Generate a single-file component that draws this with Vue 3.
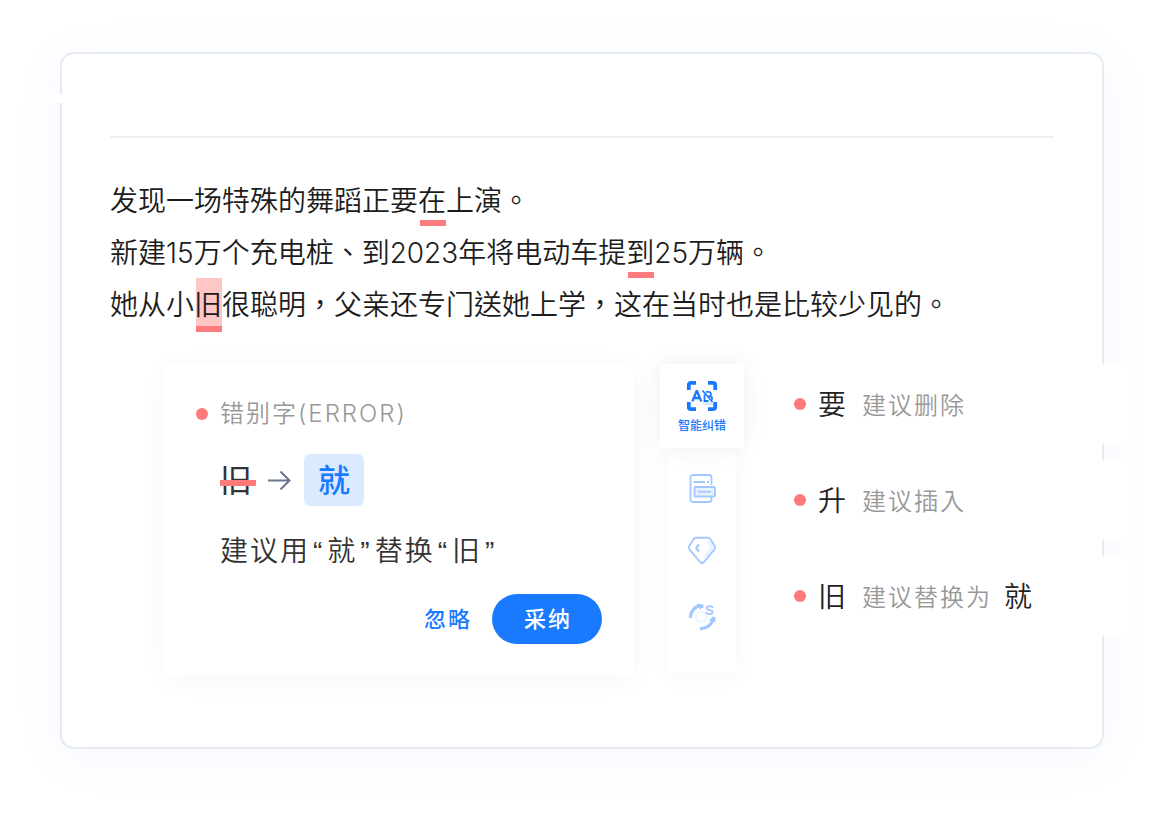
<script setup>
const lines = [
  [{ t: '发现一场特殊的舞蹈正要' }, { t: '在', mark: 'under' }, { t: '上演。' }],
  [{ t: '新建15万个充电桩、到2023年将电动车提' }, { t: '到', mark: 'under' }, { t: '25万辆。' }],
  [{ t: '她从小' }, { t: '旧', mark: 'under filled' }, { t: '很聪明，父亲还专门送她上学，这在当时也是比较少见的。' }],
]

const suggestions = [
  { word: '要', action: '建议删除' },
  { word: '升', action: '建议插入' },
  { word: '旧', action: '建议替换为', target: '就' },
]
</script>

<template>
  <main class="editor">
    <header class="bar"></header>

    <section class="document">
      <p v-for="(line, i) in lines" :key="i"><span v-for="(part, j) in line" :key="j" :class="part.mark">{{ part.t }}</span></p>
    </section>

    <div class="panels">
      <section class="popup">
        <h2 class="kind"><i class="dot"></i>错别字(ERROR)</h2>
        <div class="change">
          <del>旧</del>
          <svg class="arrow" width="24" height="20" viewBox="0 0 24 20" fill="none" stroke="#6b7594" stroke-width="2">
            <path d="M0 10.500H22M12.500 1.500l9 9-9 9" />
          </svg>
          <ins>就</ins>
        </div>
        <p class="advice">建议用<q>就</q>替换<q>旧</q></p>
        <div class="actions">
          <button class="ignore" type="button">忽略</button>
          <button class="accept" type="button">采纳</button>
        </div>
      </section>

      <nav class="tools">
        <button class="tool active" type="button">
          <svg width="32" height="32" viewBox="0 0 32 32" fill="none" stroke="#1a7aff">
            <path d="M17 23.500h10" stroke="#dbe9ff" stroke-width="3" />
            <path d="M2.800 10V5a2.200 2.200 0 0 1 2.200-2.200h5M22 2.800h5A2.200 2.200 0 0 1 29.200 5v5M29.200 22v5a2.200 2.200 0 0 1-2.200 2.200h-5M10 29.200H5A2.200 2.200 0 0 1 2.800 27v-5" stroke-width="3.800" />
            <path d="M6.300 21.500l4.200-10.300h.6l4.200 10.300M7.800 18h6" stroke-width="2.300" />
            <path d="M18.500 14.500v6.500h4M20 11.800h2.500c2.500 0 3.200 2.600 1.700 4M22.500 16.200h2c1.600.6 2 2.300 1.200 3.600" stroke-width="1.800" />
            <path d="M16.500 10.500l10 11.500" stroke-width="1.800" />
          </svg>
          <span>智能纠错</span>
        </button>
        <div class="rail">
          <button class="tool" type="button" aria-label="文档">
            <svg width="32" height="32" viewBox="0 0 32 32" fill="none" stroke="#a3c8ff" stroke-width="1.800">
              <path d="M25.500 13V5.500a2.500 2.500 0 0 0-2.500-2.500H7A2.500 2.500 0 0 0 4.500 5.500v22A2.500 2.500 0 0 0 7 30h16a2.500 2.500 0 0 0 2.500-2.500v-3" />
              <path d="M7.500 10h11.500M21 10h2" />
              <rect x="8.500" y="15" width="20.500" height="9.500" rx="1" fill="#e8f2ff" />
              <path d="M12 19.700h13" />
            </svg>
          </button>
          <button class="tool" type="button" aria-label="润色">
            <svg width="32" height="32" viewBox="0 0 32 32" fill="none" stroke="#a3c8ff" stroke-width="1.900" stroke-linejoin="round">
              <path d="M21 5h3l4.500 7-9 10h-3l6.500-9.500z" fill="#edf4ff" stroke="none" />
              <path d="M10 1.800h12q1.500 0 2.400 1.200l4.500 7.500q.9 1.500-.4 2.800L18 26q-2 2-4 0L3.500 13.300q-1.300-1.300-.4-2.800L7.600 3Q8.500 1.800 10 1.800z" />
              <path d="M13 8.500l-2.200 2.500q-.8 1 0 2l2.200 2.500" stroke-width="2.400" />
            </svg>
          </button>
          <button class="tool" type="button" aria-label="同义替换">
            <svg width="32" height="32" viewBox="0 0 32 32" fill="none" stroke="#a3c8ff">
              <circle cx="15" cy="17" r="5" stroke="#edf5ff" stroke-width="2" />
              <path d="M4.500 18A11.500 11.500 0 0 1 15 5.700" stroke-width="3.200" />
              <path d="M11 3.500l6.500 1v3l-4 2z" fill="#a3c8ff" stroke="none" />
              <path d="M14 28.500A13 13 0 0 0 27 20" stroke-width="3.200" />
              <path d="M23 21l3.500-4.500 3 1v4.500z" fill="#a3c8ff" stroke="none" />
              <path d="M26.500 8c0-2.400-5.800-2.700-5.800 0s6 1.500 6 4.200-6.400 2.600-6.500-.2" stroke-width="1.900" />
            </svg>
          </button>
        </div>
      </nav>

      <ul class="suggestions">
        <li v-for="s in suggestions" :key="s.word">
          <i class="dot"></i>
          <b>{{ s.word }}</b>
          <span>{{ s.action }}</span>
          <b v-if="s.target">{{ s.target }}</b>
        </li>
      </ul>
    </div>
  </main>
</template>

<style>
body {
  margin: 0;
  background: #fff;
}
</style>

<style scoped>
* {
  box-sizing: border-box;
}

.editor {
  position: relative;
  margin: 52px 60px 68px;
  padding: 0 48px 71px;
  border: 2px solid #e6ebf2;
  border-radius: 14px;
  background: #fff;
  box-shadow: 0 8px 52px rgba(60, 120, 240, 0.06);
  color: #1c1c1c;
  font-family: Inter, "Noto Sans CJK TC", sans-serif;
  font-weight: 350;
}

.editor::before {
  content: "";
  position: absolute;
  left: -12px;
  top: 40px;
  width: 14px;
  height: 9px;
  background: #fff;
}

p,
h2,
ul {
  margin: 0;
  padding: 0;
  font-weight: 350;
}

button {
  border: 0;
  padding: 0;
  background: none;
  font-family: inherit;
  cursor: pointer;
}

.bar {
  height: 84px;
  border-bottom: 2px solid #f0f1f5;
}

.document {
  padding-top: 36px;
  font-size: 28px;
  line-height: 54px;
  white-space: nowrap;
}

.document p {
  height: 52px;
}

.under {
  position: relative;
  display: inline-block;
  height: 52px;
  vertical-align: top;
}

.under::after {
  content: "";
  position: absolute;
  left: 2px;
  right: 0;
  bottom: 0;
  height: 6px;
  background: #ff7b7b;
}

.filled {
  height: 54px;
  background: linear-gradient(#ffc6c6, #ffc6c6) 2px 0 no-repeat;
}

.panels {
  display: grid;
  grid-template-columns: 470fr 110px 384fr;
  margin: 34px -74px 0 54px;
}

.popup {
  padding: 32px 32px 32px 56px;
  border-radius: 8px;
  background: #fff;
  box-shadow: 0 4px 28px rgba(0, 0, 0, 0.04);
}

.dot {
  flex: none;
  width: 12px;
  height: 12px;
  border-radius: 50%;
  background: #ff7b7b;
}

.kind {
  display: flex;
  align-items: center;
  gap: 12px;
  height: 36px;
  margin-left: -24px;
  color: #999;
  font-size: 24px;
  line-height: 32px;
  letter-spacing: 2px;
}

.change {
  display: flex;
  align-items: center;
  height: 52px;
  margin-top: 22px;
  font-size: 32px;
  line-height: 54px;
}

.change del {
  position: relative;
  width: 36px;
  height: 52px;
  color: #333;
  font-weight: 400;
  text-decoration: none;
}

.change del::after {
  content: "";
  position: absolute;
  left: 0;
  right: 0;
  top: 50%;
  height: 6px;
  background: #ff7b7b;
}

.arrow {
  margin: 0 12px;
}

.change ins {
  width: 60px;
  height: 52px;
  border-radius: 6px;
  background: #dceaff;
  color: #1a7aff;
  font-weight: 500;
  text-align: center;
  text-decoration: none;
}

.advice {
  height: 50px;
  margin-top: 20px;
  color: #333;
  font-size: 28px;
  line-height: 50px;
  letter-spacing: 2px;
  white-space: nowrap;
}

.advice q::before,
.advice q::after {
  margin: 0 3px;
  font-family: "Liberation Sans", sans-serif;
}

.advice q::before {
  content: "“";
}

.advice q::after {
  content: "”";
}

.actions {
  display: flex;
  justify-content: flex-end;
  gap: 20px;
  margin-top: 18px;
}

.actions button {
  height: 50px;
  font-size: 22px;
  font-weight: 500;
  line-height: 50px;
  letter-spacing: 2px;
}

.ignore {
  color: #1a7aff;
}

.actions .accept {
  width: 110px;
  padding-left: 2px;
  border-radius: 25px;
  background: #1a7aff;
  color: #fff;
}

.tools {
  width: 84px;
  margin-left: 26px;
}

.tool {
  display: flex;
  flex-direction: column;
  align-items: center;
  justify-content: center;
}

.active {
  position: relative;
  width: 84px;
  height: 84px;
  padding-top: 2px;
  border-radius: 2px;
  background: #fff;
  box-shadow: 0 0 24px rgba(0, 0, 0, 0.07);
  color: #1a7aff;
  font-size: 12px;
  font-weight: 500;
  line-height: 18px;
}

.active span {
  margin-top: 5px;
}

.rail {
  display: flex;
  flex-direction: column;
  align-items: center;
  gap: 32px;
  height: 224px;
  margin: 0 8px;
  padding-top: 24px;
  border-radius: 0 0 4px 4px;
  background: #fff;
  box-shadow: 0 4px 24px rgba(0, 0, 0, 0.04);
}

.suggestions {
  display: flex;
  flex-direction: column;
  gap: 16px;
  margin-left: 18px;
  list-style: none;
}

.suggestions li {
  position: relative;
  display: flex;
  align-items: center;
  height: 80px;
  padding-left: 32px;
  border-radius: 8px;
  background: #fff;
  line-height: 40px;
}

.suggestions b {
  margin: 0 16px 0 12px;
  padding-top: 2px;
  color: #222;
  font-size: 28px;
  font-weight: 350;
}

.suggestions span {
  padding-top: 4px;
  color: #999;
  font-size: 24px;
  letter-spacing: 2px;
}

.suggestions span + b {
  margin-left: 12px;
}
</style>
